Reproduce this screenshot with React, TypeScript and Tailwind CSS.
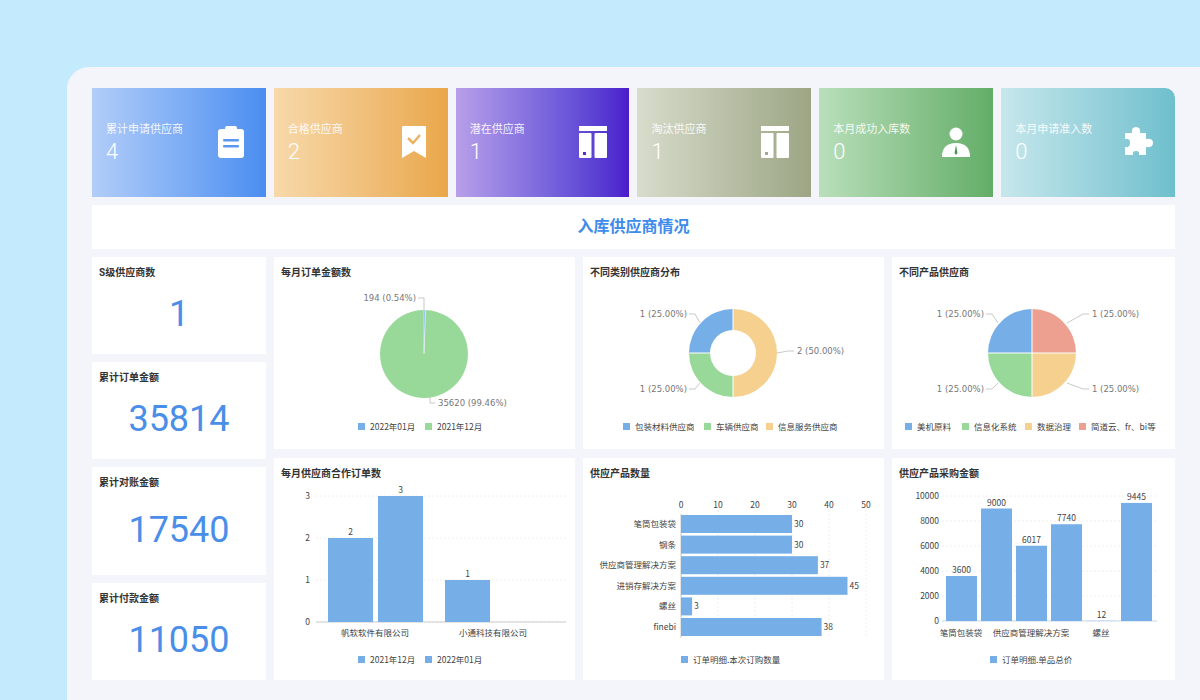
import React from "react";

const font = { fontFamily: 'Roboto, "Noto Sans CJK SC", sans-serif' };
const BLUE = "#76aee7";
const GREEN = "#98d99a";
const ORANGE = "#f5d08f";
const RED = "#eda08f";

function ClipIcon() {
  return (
    <svg width="26" height="32" viewBox="0 0 26 32">
      <rect x="0" y="3" width="26" height="29" rx="3" fill="white" />
      <rect x="7" y="0" width="12" height="6" rx="2" fill="white" />
      <rect x="5" y="13" width="16" height="2.5" rx="1" fill="currentColor" />
      <rect x="5" y="19" width="16" height="2.5" rx="1" fill="currentColor" />
    </svg>
  );
}
function BadgeIcon() {
  return (
    <svg width="24" height="32" viewBox="0 0 24 32">
      <path d="M0 1 Q0 0 1 0 H23 Q24 0 24 1 V32 L12 25 L0 32 Z" fill="white" />
      <path d="M6 12 L11 17 L18 9" stroke="#eab262" strokeWidth="2.5" fill="none" />
    </svg>
  );
}
function ColIcon({ c }: { c: string }) {
  return (
    <svg width="28" height="32" viewBox="0 0 28 32">
      <rect x="0" y="0" width="28" height="5" fill="white" />
      <rect x="0" y="7" width="12.5" height="25" rx="1" fill="white" />
      <rect x="15.5" y="7" width="12.5" height="25" rx="1" fill="white" />
      <rect x="4" y="26" width="3" height="3" fill={c} />
    </svg>
  );
}
function UserIcon() {
  return (
    <svg width="30" height="30" viewBox="0 0 30 30">
      <circle cx="15" cy="7" r="6.5" fill="white" />
      <path d="M1 30 Q1 16 15 16 Q29 16 29 30 Z" fill="white" />
      <path d="M15 18 L13.5 26 L15 28 L16.5 26 Z" fill="#4c9a52" />
    </svg>
  );
}
function PuzzleIcon() {
  return (
    <svg width="30" height="30" viewBox="0 0 30 30">
      <path
        d="M2 6 H9 Q8 0 13 0 Q18 0 17 6 H23 V12 Q30 11 30 16 Q30 21 23 20 V28 H16 Q17 24 13 24 Q9 24 10 28 H2 V20 Q7 21 7 16 Q7 11 2 12 Z"
        fill="white"
      />
    </svg>
  );
}

const stats = [
  { t: "累计申请供应商", v: "4", g: "bg-gradient-to-r from-[#b2cdf8] to-[#4a8df0]", i: <ClipIcon /> },
  { t: "合格供应商", v: "2", g: "bg-gradient-to-r from-[#f7d9aa] to-[#e9a748]", i: <BadgeIcon /> },
  { t: "潜在供应商", v: "1", g: "bg-gradient-to-r from-[#b89fe9] to-[#4b1bcc]", i: <ColIcon c="#5a2ad2" /> },
  { t: "淘汰供应商", v: "1", g: "bg-gradient-to-r from-[#d8dccc] to-[#9ca684]", i: <ColIcon c="#a3ab8c" /> },
  { t: "本月成功入库数", v: "0", g: "bg-gradient-to-r from-[#b9dfba] to-[#63ad68]", i: <UserIcon /> },
  { t: "本月申请准入数", v: "0", g: "bg-gradient-to-r from-[#c6e7ec] to-[#6ebfcd] rounded-tr-[10px]", i: <PuzzleIcon /> },
];

function Card({ title, children, h }: { title: string; children?: React.ReactNode; h: string }) {
  return (
    <div className={`bg-white flex flex-col ${h}`}>
      <div className="h-[28px] px-[7px] pt-[8px] text-[10px] font-bold text-[#333]">{title}</div>
      {children}
    </div>
  );
}

function Num({ title, v, h }: { title: string; v: string; h: string }) {
  return (
    <div className={`bg-white flex flex-col ${h}`}>
      <div className="px-[7px] pt-[8px] text-[10px] font-bold text-[#333]">{title}</div>
      <div className="flex-1 flex items-center justify-center text-[36px] text-[#4a8ee8] pb-[6px]">{v}</div>
    </div>
  );
}

const arc = (cx: number, cy: number, r: number, a0: number, a1: number) => {
  const p = (a: number) => [cx + r * Math.sin((a * Math.PI) / 180), cy - r * Math.cos((a * Math.PI) / 180)];
  const [x0, y0] = p(a0);
  const [x1, y1] = p(a1);
  return `M${cx} ${cy} L${x0} ${y0} A${r} ${r} 0 ${a1 - a0 > 180 ? 1 : 0} 1 ${x1} ${y1} Z`;
};

const lbl = { fontSize: 8.5, fill: "#777", fontFamily: "'DejaVu Sans', sans-serif" };
const ax = { fontSize: 8.5, fill: "#444", fontFamily: "'Noto Sans CJK SC', sans-serif" };

function Legend({ items, y }: { items: [number, string, string][]; y: number }) {
  return (
    <g>
      {items.map(([x, c, t]) => (
        <g key={t}>
          <rect x={x} y={y - 7} width="7" height="7" fill={c} />
          <text x={x + 12} y={y} {...ax}>
            {t}
          </text>
        </g>
      ))}
    </g>
  );
}

export default function App() {
  const hb = [
    ["笔筒包装袋", 30],
    ["钢条", 30],
    ["供应商管理解决方案", 37],
    ["进销存解决方案", 45],
    ["螺丝", 3],
    ["finebi", 38],
  ] as [string, number][];
  const vb = [3600, 9000, 6017, 7740, 12, 9445];
  return (
    <div className="w-[1200px] h-[700px] overflow-hidden bg-[#c3eafd] pt-[67px] pl-[67px]" style={font}>
      <div className="h-full bg-[#f3f5fa] rounded-tl-[22px] pt-[21px] pl-[25px]">
        <div className="w-[1083px] flex flex-col gap-[8px]">
          <div className="grid grid-cols-6 gap-[8px]">
            {stats.map((s) => (
              <div key={s.t} className={`h-[109px] ${s.g} flex items-center justify-between pl-[14px] pr-[22px] text-white`}>
                <div className="flex flex-col pt-[2px]">
                  <span className="text-[11px] opacity-90">{s.t}</span>
                  <span className="text-[22px] font-light leading-[26px]">{s.v}</span>
                </div>
                <div className="pb-[2px] text-[#5b97f0]">{s.i}</div>
              </div>
            ))}
          </div>
          <div className="h-[44px] bg-white flex items-center justify-center text-[16px] font-bold text-[#3d8bea]">入库供应商情况</div>
          <div className="grid grid-cols-[174px_301px_301px_283px] gap-[8px]">
            <div className="row-span-2 flex flex-col gap-[8px]">
              <Num title="S级供应商数" v="1" h="h-[97px]" />
              <Num title="累计订单金额" v="35814" h="h-[97px]" />
              <Num title="累计对账金额" v="17540" h="h-[108px]" />
              <Num title="累计付款金额" v="11050" h="h-[97px]" />
            </div>
            <Card title="每月订单金额数" h="h-[192px]">
              <svg viewBox="0 28 301 164" className="w-full flex-1 overflow-visible">
                <path d={arc(150, 97, 44, 2, 360)} fill={GREEN} />
                <path d={arc(150, 97, 44, 0, 2)} fill={BLUE} stroke="white" strokeWidth="0.5" />
                <polyline points="144,41 150,41 150,53" fill="none" stroke="#bbb" strokeWidth="0.8" />
                <text x="142" y="44" textAnchor="end" {...lbl}>194 (0.54%)</text>
                <polyline points="156,140 156,146 161,146" fill="none" stroke="#bbb" strokeWidth="0.8" />
                <text x="164" y="149" {...lbl}>35620 (99.46%)</text>
                <Legend y={173} items={[[84, BLUE, "2022年01月"], [151, GREEN, "2021年12月"]]} />
              </svg>
            </Card>
            <Card title="不同类别供应商分布" h="h-[192px]">
              <svg viewBox="0 28 301 164" className="w-full flex-1 overflow-visible">
                <path d={arc(150, 96, 44, 0, 180)} fill={ORANGE} />
                <path d={arc(150, 96, 44, 180, 270)} fill={GREEN} />
                <path d={arc(150, 96, 44, 270, 360)} fill={BLUE} />
                <circle cx="150" cy="96" r="23" fill="white" />
                <line x1="150" y1="52" x2="150" y2="140" stroke="white" />
                <line x1="106" y1="96" x2="150" y2="96" stroke="white" />
                <text x="104" y="60" textAnchor="end" {...lbl}>1 (25.00%)</text>
                <text x="214" y="97" {...lbl}>2 (50.00%)</text>
                <text x="104" y="135" textAnchor="end" {...lbl}>1 (25.00%)</text>
                <polyline points="106,57 112,57 117,66" fill="none" stroke="#bbb" strokeWidth="0.8" />
                <polyline points="106,132 112,132 117,126" fill="none" stroke="#bbb" strokeWidth="0.8" />
                <polyline points="211,94 205,94 194,96" fill="none" stroke="#bbb" strokeWidth="0.8" />
                <Legend y={173} items={[[40, BLUE, "包装材料供应商"], [121, GREEN, "车辆供应商"], [183, ORANGE, "信息服务供应商"]]} />
              </svg>
            </Card>
            <Card title="不同产品供应商" h="h-[192px]">
              <svg viewBox="0 28 283 164" className="w-full flex-1 overflow-visible">
                <path d={arc(140, 96, 44, 0, 90)} fill={RED} />
                <path d={arc(140, 96, 44, 90, 180)} fill={ORANGE} />
                <path d={arc(140, 96, 44, 180, 270)} fill={GREEN} />
                <path d={arc(140, 96, 44, 270, 360)} fill={BLUE} />
                <line x1="140" y1="52" x2="140" y2="140" stroke="white" />
                <line x1="96" y1="96" x2="184" y2="96" stroke="white" />
                <text x="92" y="60" textAnchor="end" {...lbl}>1 (25.00%)</text>
                <text x="92" y="135" textAnchor="end" {...lbl}>1 (25.00%)</text>
                <text x="200" y="60" {...lbl}>1 (25.00%)</text>
                <text x="200" y="135" {...lbl}>1 (25.00%)</text>
                <polyline points="94,57 100,57 106,66" fill="none" stroke="#bbb" strokeWidth="0.8" />
                <polyline points="94,132 100,132 106,126" fill="none" stroke="#bbb" strokeWidth="0.8" />
                <polyline points="197,57 191,57 175,66" fill="none" stroke="#bbb" strokeWidth="0.8" />
                <polyline points="197,132 191,132 175,126" fill="none" stroke="#bbb" strokeWidth="0.8" />
                <Legend y={173} items={[[13, BLUE, "美机原料"], [70, GREEN, "信息化系统"], [133, ORANGE, "数据治理"], [187, RED, "简道云、fr、bi等"]]} />
              </svg>
            </Card>
            <Card title="每月供应商合作订单数" h="h-[222px]">
              <svg viewBox="0 28 301 194" className="w-full flex-1 overflow-visible">
                {[0, 1, 2, 3].map((n) => (
                  <g key={n}>
                    <line x1="42" x2="292" y1={164 - n * 42} y2={164 - n * 42} stroke="#eee" strokeDasharray="2 2" />
                    <text x="36" y={167 - n * 42} textAnchor="end" {...ax}>{n}</text>
                  </g>
                ))}
                <line x1="42" x2="292" y1="164" y2="164" stroke="#ccc" />
                {[
                  [54, 2],
                  [104, 3],
                  [171, 1],
                ].map(([x, v]) => (
                  <g key={x}>
                    <rect x={x} y={164 - v * 42} width="45" height={v * 42} fill={BLUE} />
                    <text x={x + 22.5} y={161 - v * 42} textAnchor="middle" {...ax}>{v}</text>
                  </g>
                ))}
                <text x="101" y="178" textAnchor="middle" {...ax}>帆软软件有限公司</text>
                <text x="219" y="178" textAnchor="middle" {...ax}>小通科技有限公司</text>
                <Legend y={205} items={[[84, BLUE, "2021年12月"], [151, BLUE, "2022年01月"]]} />
              </svg>
            </Card>
            <Card title="供应产品数量" h="h-[222px]">
              <svg viewBox="0 28 301 194" className="w-full flex-1 overflow-visible">
                {[0, 10, 20, 30, 40, 50].map((n) => (
                  <g key={n}>
                    <line x1={98 + n * 3.7} x2={98 + n * 3.7} y1="52" y2="180" stroke="#eee" strokeDasharray="2 2" />
                    <text x={98 + n * 3.7} y="50" textAnchor="middle" {...ax}>{n}</text>
                  </g>
                ))}
                <line x1="98" x2="98" y1="56" y2="180" stroke="#ccc" />
                {hb.map(([t, v], i) => (
                  <g key={t}>
                    <rect x="98" y={57 + i * 20.6} width={v * 3.7} height="18" fill={BLUE} />
                    <text x="93" y={69 + i * 20.6} textAnchor="end" {...ax}>{t}</text>
                    <text x={100 + v * 3.7} y={69 + i * 20.6} {...ax}>{v}</text>
                  </g>
                ))}
                <Legend y={205} items={[[98, BLUE, "订单明细.本次订购数量"]]} />
              </svg>
            </Card>
            <Card title="供应产品采购金额" h="h-[222px]">
              <svg viewBox="0 28 283 194" className="w-full flex-1 overflow-visible">
                {[0, 2000, 4000, 6000, 8000, 10000].map((n) => (
                  <g key={n}>
                    <line x1="50" x2="265" y1={163 - n * 0.0125} y2={163 - n * 0.0125} stroke="#eee" strokeDasharray="2 2" />
                    <text x="47" y={166 - n * 0.0125} textAnchor="end" {...ax}>{n}</text>
                  </g>
                ))}
                <line x1="50" x2="265" y1="163" y2="163" stroke="#cde" />
                {vb.map((v, i) => (
                  <g key={i}>
                    <rect x={54 + i * 35} y={163 - v * 0.0125} width="31" height={v * 0.0125} fill={BLUE} />
                    <text x={69.5 + i * 35} y={160 - v * 0.0125} textAnchor="middle" {...ax}>{v}</text>
                  </g>
                ))}
                <text x="69" y="178" textAnchor="middle" {...ax}>笔筒包装袋</text>
                <text x="139" y="178" textAnchor="middle" {...ax}>供应商管理解决方案</text>
                <text x="209" y="178" textAnchor="middle" {...ax}>螺丝</text>
                <Legend y={205} items={[[98, BLUE, "订单明细.单品总价"]]} />
              </svg>
            </Card>
          </div>
        </div>
      </div>
    </div>
  );
}
